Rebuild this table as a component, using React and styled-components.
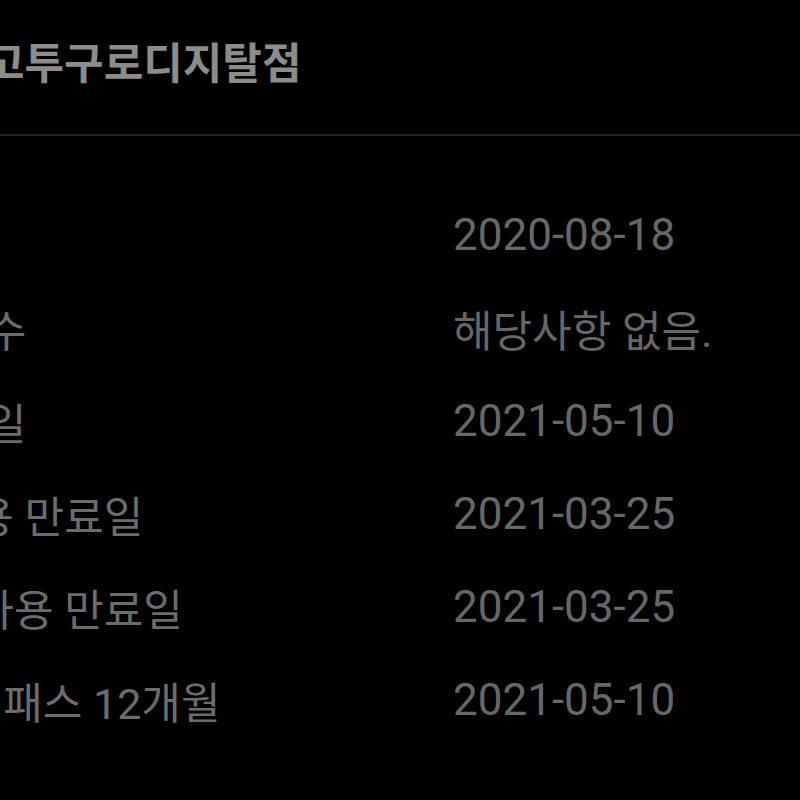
import React from 'react';
import styled, { createGlobalStyle } from 'styled-components';

const GlobalStyle = createGlobalStyle`
  html, body {
    margin: 0;
    padding: 0;
    background: #000;
  }
  body {
    width: 800px;
    height: 800px;
    overflow: hidden;
  }
`;

// the screen is wider than the viewport; its left part falls outside the picture
const Screen = styled.div`
  margin-left: -155px;
  width: 955px;
  min-height: 800px;
  background: #000;
  font-family: 'Roboto', 'Noto Sans CJK KR', sans-serif;
`;

const Header = styled.header`
  height: 136px;
  padding-left: 140px;
  display: flex;
  align-items: center;
  border-bottom: 2px solid #232323;
  box-sizing: border-box;
`;

const Title = styled.h1`
  margin: 0 0 6px;
  font-size: 43px;
  font-weight: 700;
  color: #8c8c8c;
  line-height: 1;
`;

const List = styled.div`
  padding-top: 52px;
`;

const Row = styled.div`
  display: grid;
  grid-template-columns: 608px 1fr;
  align-items: center;
  height: 93px;
`;

const Label = styled.span`
  font-size: 43px;
  color: #6c6c6c;
  white-space: nowrap;
`;

const Value = styled.span`
  font-size: ${(p) => (p.$date ? '44px' : '43px')};
  color: #676767;
  white-space: nowrap;
`;

const rows = [
  { label: '등록일', value: '2020-08-18', date: true },
  { label: 'PT 잔여수', value: '해당사항 없음.' },
  { label: 'PT 만료일', value: '2021-05-10', date: true },
  { label: '락커 이용 만료일', value: '2021-03-25', date: true },
  { label: '운동복 사용 만료일', value: '2021-03-25', date: true },
  { label: '프리미엄패스 12개월', value: '2021-05-10', date: true },
];

function App() {
  return (
    <>
      <GlobalStyle />
      <Screen>
        <Header>
          <Title>고투구로디지탈점</Title>
        </Header>
        <List>
          {rows.map((r, i) => (
            <Row key={i}>
              <Label>{r.label}</Label>
              <Value $date={r.date}>{r.value}</Value>
            </Row>
          ))}
        </List>
      </Screen>
    </>
  );
}

export default App;
